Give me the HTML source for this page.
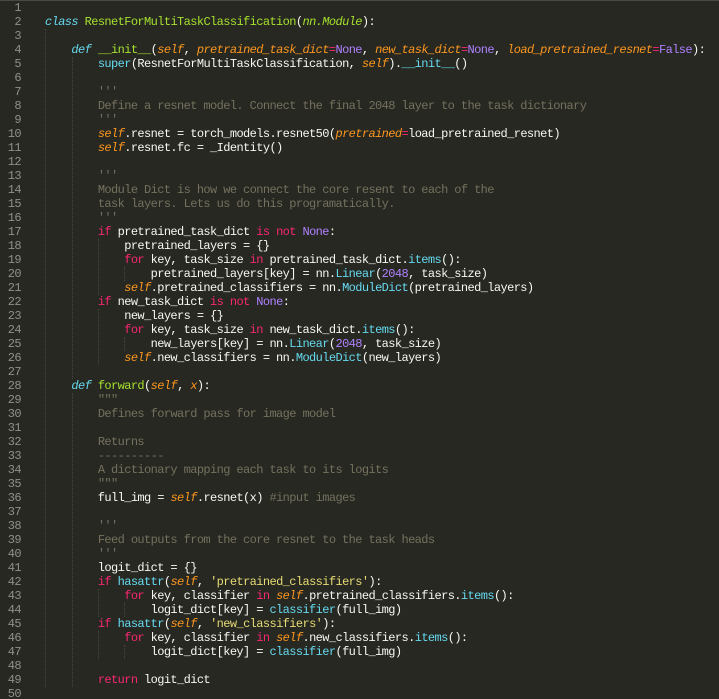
<!DOCTYPE html>
<html><head><meta charset="utf-8"><style>
html,body{margin:0;padding:0;background:#272822;width:719px;height:699px;overflow:hidden}
#ed{position:relative;width:719px;height:699px;background:#272822;border-top:1px solid #4a4a45;box-sizing:border-box}
pre{margin:0;position:absolute;top:0px;font-family:"Liberation Mono",monospace;font-size:12px;letter-spacing:-0.6px;line-height:14px;color:#F8F8F2}
#ln{left:0;width:21px;text-align:right;color:#8F908A}
#code{left:45px}
.k{color:#F92672}.f{color:#66D9EF}.c{color:#A6E22E}.p{color:#FD971F;font-style:italic}.n{color:#AE81FF}.m{color:#75715E}.s{color:#E6DB74}.i{color:#66D9EF;font-style:italic}.ci{color:#A6E22E;font-style:italic}
.g{position:absolute;width:0;border-left:1px dotted #464741}
</style></head><body><div id="ed">
<div class="g" style="left:45px;top:28px;height:658px"></div>
<div class="g" style="left:72px;top:56px;height:322px"></div>
<div class="g" style="left:72px;top:392px;height:294px"></div>
<div class="g" style="left:98px;top:238px;height:56px"></div>
<div class="g" style="left:98px;top:308px;height:56px"></div>
<div class="g" style="left:98px;top:588px;height:28px"></div>
<div class="g" style="left:98px;top:630px;height:28px"></div>
<div class="g" style="left:124px;top:266px;height:14px"></div>
<div class="g" style="left:124px;top:336px;height:14px"></div>
<div class="g" style="left:124px;top:602px;height:14px"></div>
<div class="g" style="left:124px;top:644px;height:14px"></div>
<pre id="ln">1
2
3
4
5
6
7
8
9
10
11
12
13
14
15
16
17
18
19
20
21
22
23
24
25
26
27
28
29
30
31
32
33
34
35
36
37
38
39
40
41
42
43
44
45
46
47
48
49
50</pre>
<pre id="code"> 
<span class="i">class</span> <span class="c">ResnetForMultiTaskClassification</span>(<span class="ci">nn.Module</span>):

    <span class="i">def</span> <span class="c">__init__</span>(<span class="p">self</span>, <span class="p">pretrained_task_dict</span><span class="k">=</span><span class="n">None</span>, <span class="p">new_task_dict</span><span class="k">=</span><span class="n">None</span>, <span class="p">load_pretrained_resnet</span><span class="k">=</span><span class="n">False</span>):
        <span class="f">super</span>(ResnetForMultiTaskClassification, <span class="p">self</span>).<span class="f">__init__</span>()

        <span class="m">'''</span>
        <span class="m">Define a resnet model. Connect the final 2048 layer to the task dictionary</span>
        <span class="m">'''</span>
        <span class="p">self</span>.resnet = torch_models.resnet50(<span class="p">pretrained</span><span class="k">=</span>load_pretrained_resnet)
        <span class="p">self</span>.resnet.fc = _Identity()

        <span class="m">'''</span>
        <span class="m">Module Dict is how we connect the core resent to each of the</span>
        <span class="m">task layers. Lets us do this programatically.</span>
        <span class="m">'''</span>
        <span class="k">if</span> pretrained_task_dict <span class="k">is</span> <span class="k">not</span> <span class="n">None</span>:
            pretrained_layers = {}
            <span class="k">for</span> key, task_size <span class="k">in</span> pretrained_task_dict.<span class="f">items</span>():
                pretrained_layers[key] = nn.<span class="f">Linear</span>(<span class="n">2048</span>, task_size)
            <span class="p">self</span>.pretrained_classifiers = nn.<span class="f">ModuleDict</span>(pretrained_layers)
        <span class="k">if</span> new_task_dict <span class="k">is</span> <span class="k">not</span> <span class="n">None</span>:
            new_layers = {}
            <span class="k">for</span> key, task_size <span class="k">in</span> new_task_dict.<span class="f">items</span>():
                new_layers[key] = nn.<span class="f">Linear</span>(<span class="n">2048</span>, task_size)
            <span class="p">self</span>.new_classifiers = nn.<span class="f">ModuleDict</span>(new_layers)

    <span class="i">def</span> <span class="c">forward</span>(<span class="p">self</span>, <span class="p">x</span>):
        <span class="m">"""</span>
        <span class="m">Defines forward pass for image model</span>

        <span class="m">Returns</span>
        <span class="m">----------</span>
        <span class="m">A dictionary mapping each task to its logits</span>
        <span class="m">"""</span>
        full_img = <span class="p">self</span>.resnet(x) <span class="m">#input images</span>

        <span class="m">'''</span>
        <span class="m">Feed outputs from the core resnet to the task heads</span>
        <span class="m">'''</span>
        logit_dict = {}
        <span class="k">if</span> <span class="f">hasattr</span>(<span class="p">self</span>, <span class="s">'pretrained_classifiers'</span>):
            <span class="k">for</span> key, classifier <span class="k">in</span> <span class="p">self</span>.pretrained_classifiers.<span class="f">items</span>():
                logit_dict[key] = <span class="f">classifier</span>(full_img)
        <span class="k">if</span> <span class="f">hasattr</span>(<span class="p">self</span>, <span class="s">'new_classifiers'</span>):
            <span class="k">for</span> key, classifier <span class="k">in</span> <span class="p">self</span>.new_classifiers.<span class="f">items</span>():
                logit_dict[key] = <span class="f">classifier</span>(full_img)

        <span class="k">return</span> logit_dict
</pre>
</div></body></html>
